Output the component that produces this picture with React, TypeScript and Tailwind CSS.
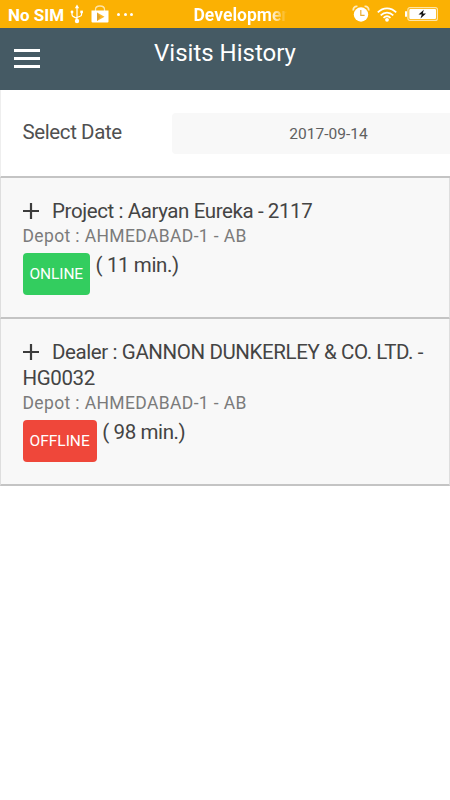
import React from "react";

const visits = [
  {
    title: "Project : Aaryan Eureka - 2117",
    depot: "AHMEDABAD-1 - AB",
    status: "ONLINE",
    minutes: 11,
  },
  {
    title: "Dealer : GANNON DUNKERLEY & CO. LTD. - HG0032",
    depot: "AHMEDABAD-1 - AB",
    status: "OFFLINE",
    minutes: 98,
  },
];

const UsbIcon = () => (
  <svg width="14" height="20" viewBox="0 0 14 20" fill="none" stroke="#fff" strokeWidth="1.2">
    <path d="M7 3v13M2 8v2.6c0 1 .5 1.7 1.5 2L7 14.5M11.6 8v2.2c0 1-.5 1.7-1.5 2L7 13.5" />
    <path d="M7 .5L9.200 4.200H4.800z" fill="#fff" stroke="none" />
    <circle cx="7" cy="17" r="2.200" fill="#fff" stroke="none" />
    <circle cx="2" cy="8" r="1.400" fill="#fff" stroke="none" />
    <path d="M10.300 6.600h2.600v2.600h-2.600z" fill="#fff" stroke="none" />
  </svg>
);

const StoreIcon = () => (
  <svg width="18" height="18" viewBox="0 0 18 18">
    <path d="M4.500 6V4.500C4.500 2.300 6.300 1 9 1s4.500 1.300 4.500 3.500V6" fill="none" stroke="#fff" strokeOpacity=".65" strokeWidth="1.300" />
    <path d="M.5 5.500h17v11a1 1 0 0 1-1 1h-15a1 1 0 0 1-1-1z" fill="#fff" />
    <path d="M6 7.500v8.500l7.500-4.250z" fill="#fbb62a" />
    <path d="M6 7.500v8.500l3.500-4.250z" fill="#e0a32c" />
  </svg>
);

const AlarmIcon = () => (
  <svg width="18" height="18" viewBox="0 0 18 18" fill="none">
    <path d="M1.500 5.500C.8 3 3 .8 5.500 1.500M12.500 1.500C15 .8 17.200 3 16.500 5.500" stroke="#fff" strokeOpacity=".75" strokeWidth="1.800" />
    <circle cx="9" cy="9.500" r="7.200" fill="#fff" />
    <path d="M8.800 5v5.300h3.800" stroke="#e9ad35" strokeWidth="1.200" />
  </svg>
);

const WifiIcon = () => (
  <svg width="20" height="15" viewBox="0 0 20 15" fill="none" stroke="#fff" strokeWidth="1.700">
    <path d="M.8 5.400C6-.1 14-.1 19.200 5.400" />
    <path d="M3.700 8.300c3.700-3.700 8.900-3.700 12.600 0" />
    <path d="M6.500 10.900c2.100-2 4.900-2 7 0" />
    <circle cx="10" cy="12.800" r="1.900" fill="#fff" stroke="none" />
  </svg>
);

const BatteryIcon = () => (
  <svg width="33" height="14" viewBox="0 0 33 14">
    <rect x="0" y="4" width="2" height="6" rx="1" fill="#fff" />
    <rect x="2.900" y=".6" width="29.500" height="12.800" rx="2" fill="none" stroke="#fff" strokeOpacity=".65" strokeWidth="1.200" />
    <rect x="4.300" y="2" width="26.700" height="10" rx="1" fill="#fff" />
    <path d="M18.800 2.800l-5.300 4.800h3.300l-1.300 3.800 5.500-5h-3.200z" fill="#111" />
  </svg>
);

const StatusBar = () => (
  <div className="flex h-7 items-center bg-[#fbb103] text-white">
    <span className="ml-2 mt-0.5 w-[56px] whitespace-nowrap text-[17px] font-bold leading-7">No SIM</span>
    <div className="ml-1.5 flex w-3.5">
      <UsbIcon />
    </div>
    <div className="ml-[7px]">
      <StoreIcon />
    </div>
    <div className="ml-2 flex gap-[3.5px]">
      <i className="size-[3px] rounded-full bg-white" />
      <i className="size-[3px] rounded-full bg-white" />
      <i className="size-[3px] rounded-full bg-white" />
    </div>
    <span className="ml-[60.5px] mt-px whitespace-nowrap bg-[linear-gradient(to_right,white_78%,transparent_96%)] bg-clip-text text-[17.5px] font-bold leading-7 text-transparent">
      Developmen
    </span>
    <div className="ml-auto mr-3 flex items-center">
      <AlarmIcon />
      <div className="ml-[7px] mr-2">
        <WifiIcon />
      </div>
      <BatteryIcon />
    </div>
  </div>
);

const Header = () => (
  <header className="flex h-[62px] bg-[#455a64] text-white">
    <button className="ml-3.5 mt-5 flex h-5 w-[26px] flex-col gap-[5px] pt-[0.5px]">
      <span className="h-[3px] w-full bg-white" />
      <span className="h-[3px] w-full bg-white" />
      <span className="h-[3px] w-full bg-white" />
    </button>
    <h1 className="mr-10 flex-1 pt-[9px] text-center text-[24px] leading-8">Visits History</h1>
  </header>
);

const PlusIcon = () => (
  <svg className="mr-[13.5px] inline-block align-[-1px]" width="16" height="16" viewBox="0 0 16 16">
    <path d="M8 0v16M0 8h16" stroke="#3c3c3c" strokeWidth="2.200" />
  </svg>
);

const VisitItem = ({ visit }: { visit: any }) => (
  <li className="border-b-2 border-l border-r border-b-[#c4c4c4] border-l-[#dedede] border-r-[#dedede] bg-[#f8f8f8] pb-[22px] pl-[21.5px] pr-5 pt-5">
    <h2 className="text-[20.5px] leading-[26px] tracking-[-0.4px] text-[#444]">
      <PlusIcon />
      {visit.title}
    </h2>
    <p className="text-[17.5px] leading-6 tracking-[0.37px] text-[#7b7b7b]">Depot : {visit.depot}</p>
    <div className="mt-[5px] flex items-start gap-[5.5px]">
      <span
        className={`flex h-[42px] items-center rounded px-[7px] pt-0.5 text-[15.5px] text-white ${
          visit.status === "ONLINE" ? "bg-[#33cd5f] tracking-[-0.1px]" : "bg-[#ef473a]"
        }`}
      >
        {visit.status}
      </span>
      <span className="text-[20.5px] leading-6 tracking-[-0.4px] text-[#444]">( {visit.minutes} min.)</span>
    </div>
  </li>
);

export default function App() {
  return (
    <div className="h-[800px] w-[450px] overflow-hidden bg-white font-['Roboto',sans-serif]">
      <StatusBar />
      <Header />
      <div className="flex h-[88px] items-start border-b-2 border-l border-b-[#c4c4c4] border-l-[#eee] pl-[21.5px]">
        <label className="mt-[29px] w-[149.5px] text-[20.5px] leading-[26px] tracking-[-0.4px] text-[#505050]">Select Date</label>
        <div className="mt-[23px] flex h-[41px] flex-1 items-center justify-center rounded-l bg-[#f8f8f8] pl-[35px] pt-0.5 text-[15.5px] text-[#606060]">
          2017-09-14
        </div>
      </div>
      <ul>
        {visits.map((visit) => (
          <VisitItem key={visit.title} visit={visit} />
        ))}
      </ul>
    </div>
  );
}
